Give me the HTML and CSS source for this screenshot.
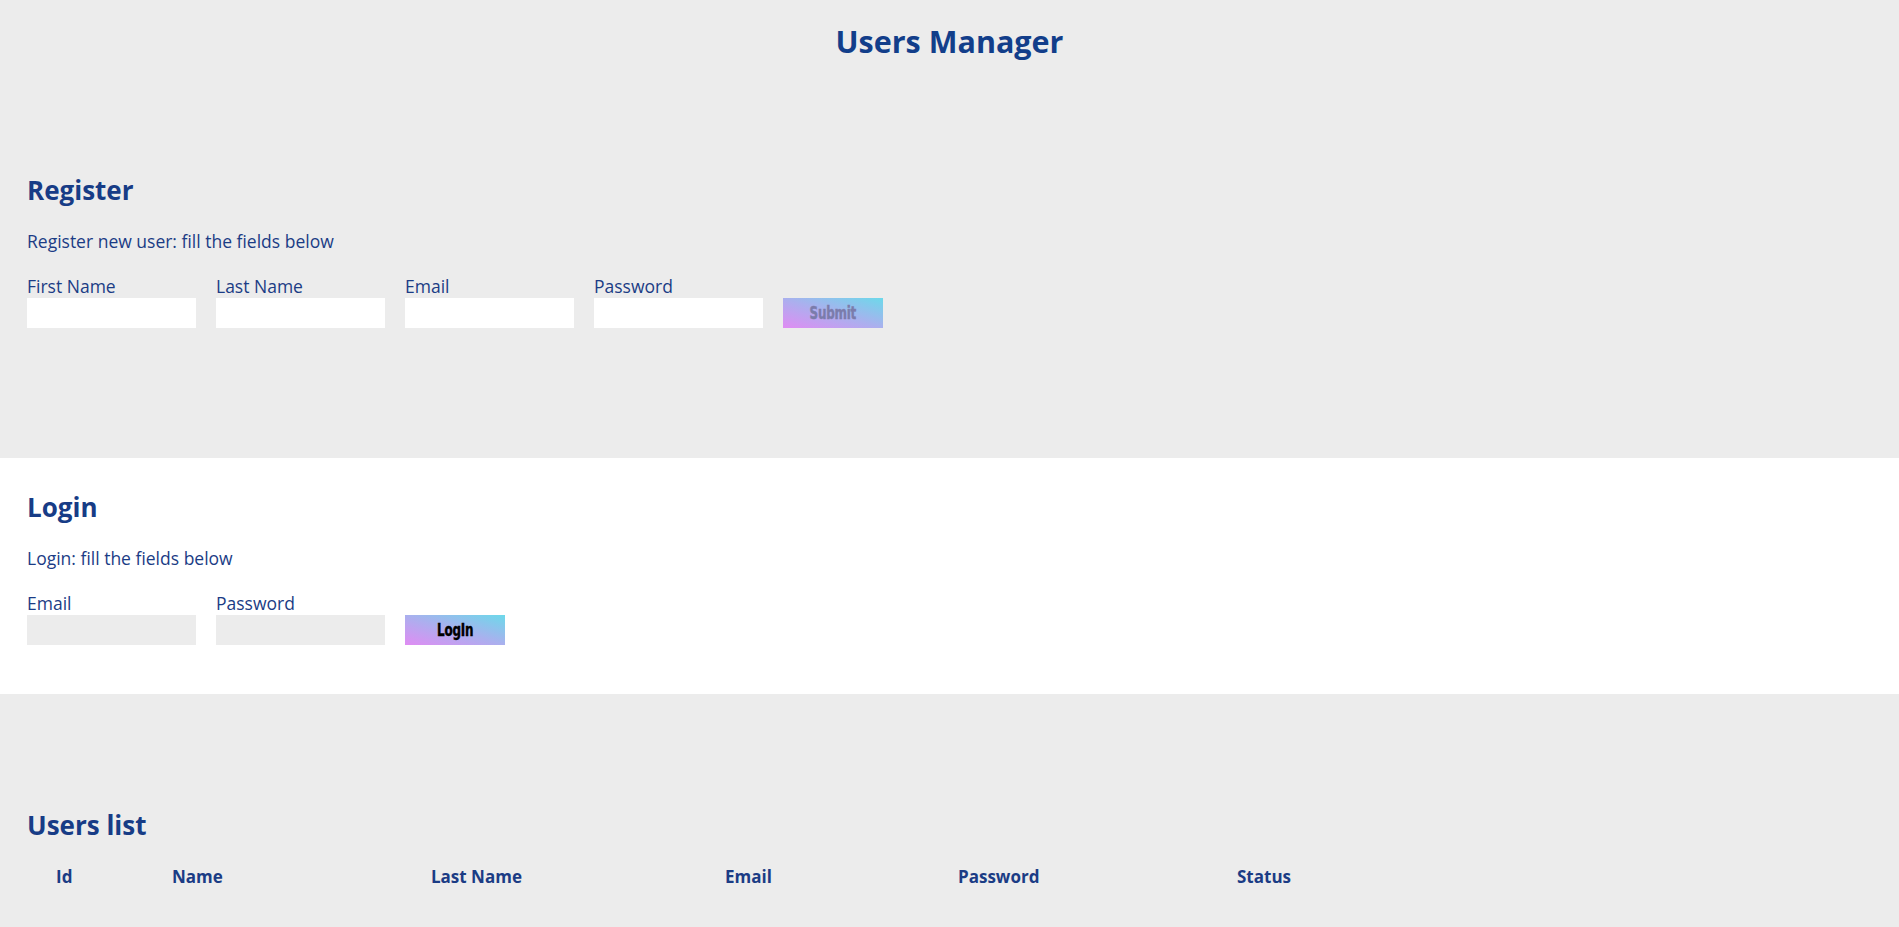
FILE: index.html
```html
<!DOCTYPE html>
<html lang="en">
<head>
<meta charset="utf-8">
<title>Users Manager</title>
<link rel="stylesheet" href="styles.css">
</head>
<body>
  <header class="page-header">
    <h1 class="page-title">Users Manager</h1>
  </header>

  <section class="panel panel-register">
    <h2 class="panel-title">Register</h2>
    <p class="panel-text">Register new user: fill the fields below</p>
    <form class="form-row">
      <label class="field">
        <span class="field-label">First Name</span>
        <input class="field-input input-light" type="text">
      </label>
      <label class="field">
        <span class="field-label">Last Name</span>
        <input class="field-input input-light" type="text">
      </label>
      <label class="field">
        <span class="field-label">Email</span>
        <input class="field-input input-light" type="text">
      </label>
      <label class="field">
        <span class="field-label">Password</span>
        <input class="field-input input-light" type="password">
      </label>
      <button class="btn btn-disabled" type="button"><span class="btn-text">Submit</span></button>
    </form>
  </section>

  <section class="panel panel-login">
    <h2 class="panel-title">Login</h2>
    <p class="panel-text">Login: fill the fields below</p>
    <form class="form-row">
      <label class="field">
        <span class="field-label">Email</span>
        <input class="field-input input-gray" type="text">
      </label>
      <label class="field">
        <span class="field-label">Password</span>
        <input class="field-input input-gray" type="password">
      </label>
      <button class="btn btn-active" type="button"><span class="btn-text">LogIn</span></button>
    </form>
  </section>

  <section class="panel panel-users">
    <h2 class="panel-title">Users list</h2>
    <div class="users-head">
      <span class="col">Id</span>
      <span class="col">Name</span>
      <span class="col">Last Name</span>
      <span class="col">Email</span>
      <span class="col">Password</span>
      <span class="col">Status</span>
    </div>
  </section>
</body>
</html>
```

FILE: styles.css
```css
* {
  box-sizing: border-box;
}

html, body {
  margin: 0;
  padding: 0;
}

body {
  background: #ececec;
  font-family: "Open Sans", "Noto Sans", sans-serif;
  color: #1b3c85;
  font-size: 17.5px;
  line-height: 24px;
}

.page-header {
  height: 141px;
  padding-top: 21px;
}

.page-title {
  margin: 0;
  text-align: center;
  font-size: 30.5px;
  line-height: 40px;
  font-weight: 700;
  color: #123e8a;
}

.panel {
  padding-left: 27px;
  padding-right: 27px;
}

.panel-register {
  padding-top: 32px;
  padding-bottom: 130px;
}

.panel-login {
  background: #ffffff;
  padding-top: 32px;
  padding-bottom: 49px;
}

.panel-users {
  padding-top: 114px;
  padding-bottom: 40px;
}

.panel-title {
  margin: 0;
  font-size: 26px;
  line-height: 34px;
  font-weight: 700;
  color: #173c86;
}

.panel-text {
  margin: 22px 0 0;
  font-size: 17.5px;
  line-height: 24px;
}

.form-row {
  margin-top: 21px;
  display: flex;
  align-items: flex-end;
  gap: 20px;
}

.field {
  display: flex;
  flex-direction: column;
  width: 169px;
}

.field-label {
  font-size: 17.5px;
  line-height: 24px;
}

.field-input {
  width: 169px;
  height: 30px;
  border: none;
  outline: none;
  padding: 0 6px;
  margin: 0;
  font: inherit;
}

.input-light {
  background: #ffffff;
}

.input-gray {
  background: #ececec;
}

.btn {
  width: 100px;
  height: 30px;
  border: none;
  padding: 0;
  margin: 0;
  background: linear-gradient(to top right, #e08cf3 0%, #aab0ee 50%, #6cd9ea 100%);
  cursor: pointer;
  display: flex;
  align-items: center;
  justify-content: center;
}

.btn-text {
  display: inline-block;
  font-family: "DejaVu Sans", "Liberation Sans", sans-serif;
  font-stretch: condensed;
  font-weight: 700;
  font-size: 17px;
  line-height: 20px;
  letter-spacing: -0.3px;
  transform: scaleX(0.78);
  -webkit-text-stroke: 0.4px currentColor;
}

.btn-disabled {
  color: #7b7cab;
}

.btn-active {
  color: #000000;
}

.users-head {
  margin-top: 23px;
  display: grid;
  grid-template-columns: 116px 259px 294px 233px 279px auto;
  padding-left: 29px;
  font-weight: 700;
  font-size: 17px;
  line-height: 24px;
}
```
